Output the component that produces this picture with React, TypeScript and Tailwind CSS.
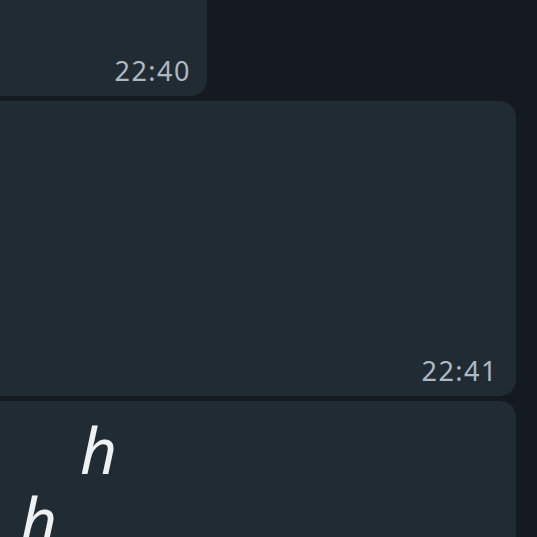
export default function App() {
  return (
    <div className="h-[537px] w-[537px] overflow-hidden bg-[#141a20] font-['Noto_Sans',sans-serif]">
      <div className="flex flex-col gap-[5px] -ml-5 -mt-10">
        {/* Earlier message */}
        <div className="flex h-[136px] w-[227px] items-end justify-end rounded-2xl bg-[#212b33] pr-[16px] pb-[12px]">
          <span className="text-[27px] leading-none tracking-[1.5px] text-[#aeb8c0]">22:40</span>
        </div>

        {/* Empty message */}
        <div className="flex h-[295px] w-[536px] items-end justify-end rounded-2xl bg-[#212b33] pr-[18px] pb-[12px]">
          <span className="text-[27px] leading-none tracking-[1.5px] text-[#aeb8c0]">22:41</span>
        </div>

        {/* Message with text */}
        <div className="h-[200px] w-[536px] rounded-t-2xl bg-[#212b33] pt-[14px]">
          <p className="pl-[100px] text-[64px] leading-[70px] text-[#eef1f4] italic">h</p>
          <p className="pl-[40px] text-[64px] leading-[70px] text-[#eef1f4] italic">h</p>
        </div>
      </div>
    </div>
  )
}
